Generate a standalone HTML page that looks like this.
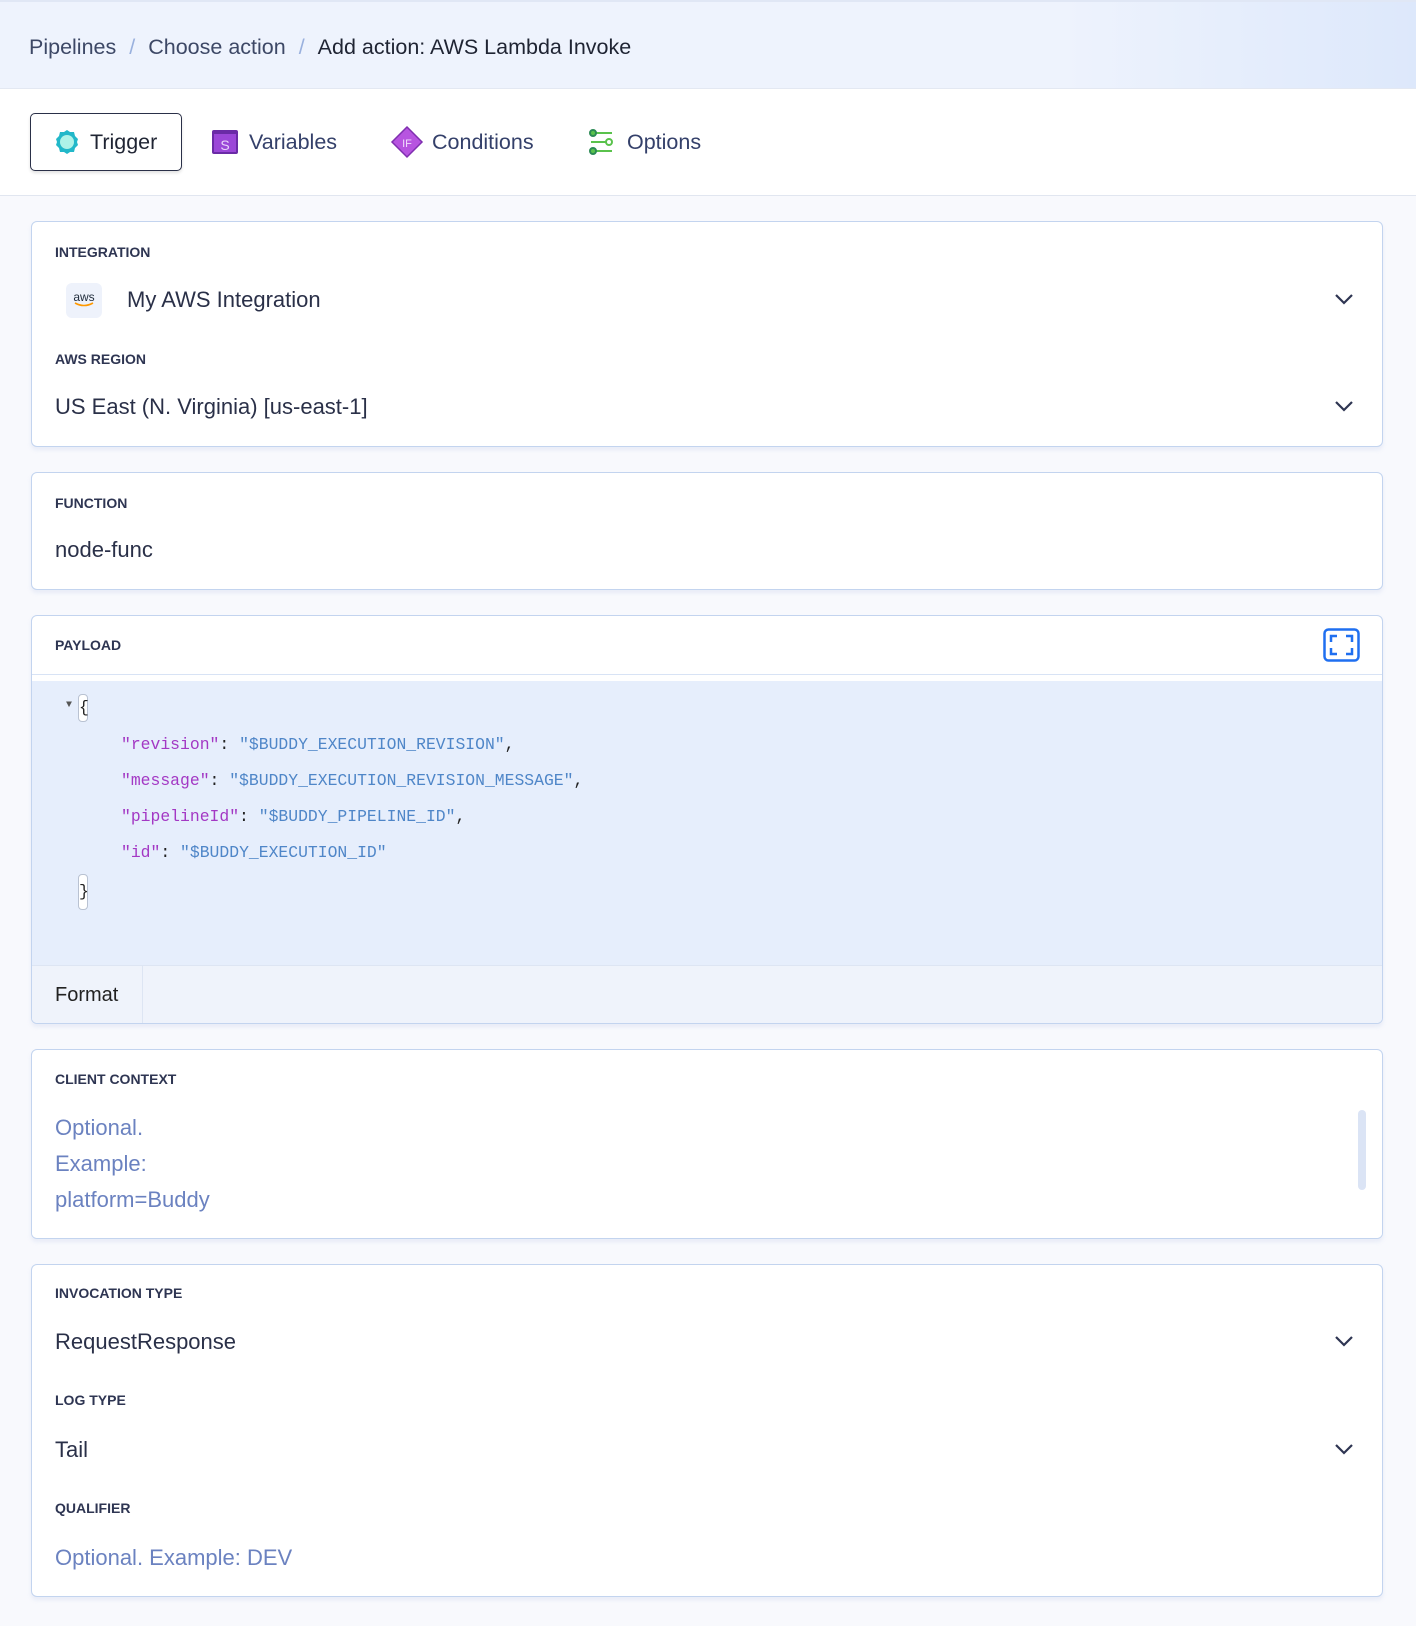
<!DOCTYPE html>
<html><head><meta charset="utf-8"><style>
*{box-sizing:border-box;margin:0;padding:0}
body{width:1416px;height:1626px;background:#f8f9fd;font-family:"Liberation Sans",sans-serif;color:#2a3048;position:relative;overflow:hidden}
.hdr{position:absolute;left:0;top:0;width:1416px;height:89px;background:linear-gradient(90deg,#eef3fd 0%,#eef3fd 75%,#dde8fb 100%);border-top:2px solid #e0e7f5;border-bottom:1px solid #e3e8f2}
.bc{position:absolute;left:29px;top:33px;font-size:21.5px;color:#3d4866}
.bc .s{color:#9ab1de;margin:0 13px}
.bc .c{color:#1f2433}
.tabs{position:absolute;left:0;top:89px;width:1416px;height:107px;background:#fff;border-bottom:1px solid #e1e6f0}
.tab{position:absolute;top:24px;height:58px;display:flex;align-items:center;font-size:21.5px;color:#34406a}
.tab.act{left:30px;width:152px;border:1px solid #2a3048;border-radius:5px;background:#fff;color:#1f2433;box-shadow:0 2px 3px rgba(0,0,0,.12);padding-left:22px}
.card{position:absolute;left:31px;width:1352px;background:#fff;border:1px solid #c3d4ef;border-radius:6px;box-shadow:0 3px 4px rgba(160,180,220,.18)}
.lbl{position:absolute;left:23px;font-size:14px;font-weight:bold;color:#2e3552}
.val{position:absolute;left:23px;font-size:22px;color:#2a3048}
.ph{color:#6b82c0}
.chev{position:absolute;right:28px;width:20px;height:12px}
.code{position:absolute;left:0;top:65px;width:1350px;height:284px;background:#e6eefc;font-family:"Liberation Mono",monospace;font-size:16.4px}
.code div{position:absolute;white-space:pre}
.k{color:#a338c4}.v{color:#4f86c8}.p{color:#222}
.fmt{position:absolute;left:0;top:349px;width:1350px;height:59px;background:#eff3fb;border-top:1px solid #dde5f3}
.fmt span{position:absolute;left:0;top:0;width:111px;height:58px;border-right:1px solid #dde5f3;font-size:20px;line-height:58px;padding-left:23px;color:#222}
</style></head><body>
<div class="hdr"><div class="bc">Pipelines<span class="s">/</span>Choose action<span class="s">/</span><span class="c">Add action: AWS Lambda Invoke</span></div></div>
<div class="tabs">
<div class="tab act"><svg width="28" height="28" viewBox="0 0 28 28" style="margin-right:9px"><path d="M14 2l3 2 4 0 1 4 3 3-1 3 1 3-3 3-1 4-4 0-3 2-3-2-4 0-1-4-3-3 1-3-1-3 3-3 1-4 4 0z" fill="#22b8c9"/><circle cx="14" cy="14" r="7" fill="#aef3e8"/></svg>Trigger</div>
<div class="tab" style="left:211px"><svg width="28" height="28" viewBox="0 0 28 28" style="margin-right:10px"><rect x="1" y="2" width="26" height="24" rx="2" fill="#6a2ba6"/><rect x="3" y="6" width="22" height="18" fill="#9b47d8"/><text x="14" y="22" font-size="14" text-anchor="middle" fill="#e9d4fb" font-family="Liberation Sans">S</text></svg>Variables</div>
<div class="tab" style="left:390px"><svg width="34" height="34" viewBox="0 0 34 34" style="margin-right:8px"><path d="M17 2L32 17 17 32 2 17z" fill="#b754e0" stroke="#7f2fb0" stroke-width="1.5"/><text x="17" y="22" font-size="11" text-anchor="middle" fill="#f0dcfb" font-family="Liberation Sans">IF</text></svg>Conditions</div>
<div class="tab" style="left:588px"><svg width="28" height="28" viewBox="0 0 28 28" style="margin-right:11px"><g stroke="#5ac24c" stroke-width="2" fill="#fff"><line x1="5" y1="5" x2="24" y2="5"/><line x1="3" y1="14" x2="18" y2="14"/><line x1="5" y1="23" x2="24" y2="23"/><circle cx="5" cy="5" r="3" fill="#5ac24c" stroke="#2c8a55"/><circle cx="21" cy="14" r="3"/><circle cx="5" cy="23" r="3" fill="#5ac24c" stroke="#2c8a55"/></g></svg>Options</div>
</div>

<div class="card" style="top:221px;height:226px">
<div class="lbl" style="top:22px">INTEGRATION</div>
<div style="position:absolute;left:34px;top:61px;width:36px;height:35px;background:#eef2fb;border-radius:6px;text-align:center;font-size:12px;color:#232f3e;padding-top:7px">aws<svg width="22" height="6" viewBox="0 0 22 6" style="display:block;margin:-2px auto 0"><path d="M2 1q9 5 18 0" stroke="#f90" stroke-width="1.6" fill="none"/></svg></div>
<div class="val" style="left:95px;top:65px">My AWS Integration</div>
<svg class="chev" style="top:71px" viewBox="0 0 20 12"><path d="M2 2l8 8 8-8" stroke="#2e3552" stroke-width="2.2" fill="none"/></svg>
<div class="lbl" style="top:129px">AWS REGION</div>
<div class="val" style="top:172px">US East (N. Virginia) [us-east-1]</div>
<svg class="chev" style="top:178px" viewBox="0 0 20 12"><path d="M2 2l8 8 8-8" stroke="#2e3552" stroke-width="2.2" fill="none"/></svg>
</div>

<div class="card" style="top:472px;height:118px">
<div class="lbl" style="top:22px">FUNCTION</div>
<div class="val" style="top:64px">node-func</div>
</div>

<div class="card" style="top:615px;height:409px;overflow:hidden">
<div class="lbl" style="top:21px">PAYLOAD</div>
<svg style="position:absolute;left:1291px;top:12px" width="37" height="34" viewBox="0 0 37 34"><rect x="1.5" y="1.5" width="34" height="31" rx="4" fill="none" stroke="#1f6ff0" stroke-width="2.5"/><path d="M8 14V8h6M23 8h6v6M29 20v6h-6M14 26H8v-6" stroke="#1f6ff0" stroke-width="2.5" fill="none"/></svg>
<div style="position:absolute;left:0;top:58px;width:1352px;border-top:1px solid #d8e3f5"></div>
<div class="code">
<div style="left:34px;top:19px;font-size:10px;color:#555">▼</div>
<div style="left:46px;top:13px;width:10px;height:28px;border:1px solid #b9c2d2;border-radius:4px;background:#fff"></div>
<div class="p" style="left:47px;top:17px">{</div>
<div style="left:89px;top:54px"><span class="k">"revision"</span><span class="p">: </span><span class="v">"$BUDDY_EXECUTION_REVISION"</span><span class="p">,</span></div>
<div style="left:89px;top:90px"><span class="k">"message"</span><span class="p">: </span><span class="v">"$BUDDY_EXECUTION_REVISION_MESSAGE"</span><span class="p">,</span></div>
<div style="left:89px;top:126px"><span class="k">"pipelineId"</span><span class="p">: </span><span class="v">"$BUDDY_PIPELINE_ID"</span><span class="p">,</span></div>
<div style="left:89px;top:162px"><span class="k">"id"</span><span class="p">: </span><span class="v">"$BUDDY_EXECUTION_ID"</span></div>
<div style="left:46px;top:193px;width:10px;height:36px;border:1px solid #b9c2d2;border-radius:4px;background:#fff"></div>
<div class="p" style="left:47px;top:201px">}</div>
</div>
<div class="fmt"><span>Format</span></div>
</div>

<div class="card" style="top:1049px;height:190px;overflow:hidden">
<div class="lbl" style="top:21px">CLIENT CONTEXT</div>
<div class="val ph" style="top:65px">Optional.</div>
<div class="val ph" style="top:101px">Example:</div>
<div class="val ph" style="top:137px">platform=Buddy</div>
<div class="val ph" style="top:173px">customerId=$BUDDY_INVOCATION_ID</div>
<div style="position:absolute;left:0;top:176px;width:1352px;height:16px;background:#fff"></div>
<div style="position:absolute;left:1326px;top:60px;width:8px;height:80px;background:#dbe4f5;border-radius:4px"></div>
</div>

<div class="card" style="top:1264px;height:333px">
<div class="lbl" style="top:20px">INVOCATION TYPE</div>
<div class="val" style="top:64px">RequestResponse</div>
<svg class="chev" style="top:70px" viewBox="0 0 20 12"><path d="M2 2l8 8 8-8" stroke="#2e3552" stroke-width="2.2" fill="none"/></svg>
<div class="lbl" style="top:127px">LOG TYPE</div>
<div class="val" style="top:172px">Tail</div>
<svg class="chev" style="top:178px" viewBox="0 0 20 12"><path d="M2 2l8 8 8-8" stroke="#2e3552" stroke-width="2.2" fill="none"/></svg>
<div class="lbl" style="top:235px">QUALIFIER</div>
<div class="val ph" style="top:280px">Optional. Example: DEV</div>
</div>
</body></html>
